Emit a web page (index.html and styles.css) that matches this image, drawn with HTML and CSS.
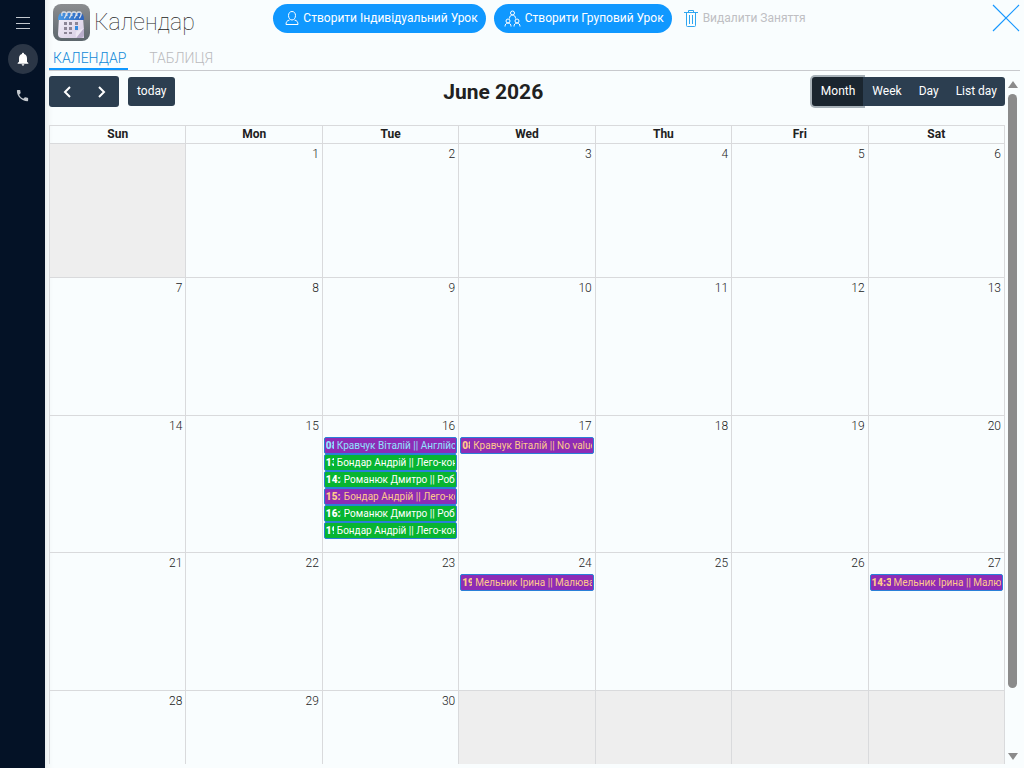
FILE: index.html
```html
<!DOCTYPE html>
<html lang="uk">

<head>
  <meta charset="utf-8">
  <title>Календар</title>
  <link rel="stylesheet" href="styles.css">
</head>

<body>
  <nav class="sidebar">
    <button class="side-button" aria-label="Menu">
      <svg width="14" height="14" viewBox="0 0 14 14"><path d="M0 1.500h14M0 7.500h14M0 12.500h14" stroke="#c3c8ce" stroke-width="1"/></svg>
    </button>
    <button class="side-button active" aria-label="Notifications">
      <svg width="16" height="16" viewBox="0 0 24 24" fill="#fff"><path d="M12 22c1.100 0 2-.9 2-2h-4c0 1.100.9 2 2 2zm6-6v-5c0-3.070-1.630-5.640-4.500-6.320V4c0-.83-.67-1.500-1.500-1.500s-1.500.67-1.500 1.500v.68C7.640 5.360 6 7.920 6 11v5l-2 2v1h16v-1l-2-2z"/></svg>
    </button>
    <button class="side-button" aria-label="Phone">
      <svg width="15" height="15" viewBox="0 0 24 24" fill="#c3c8ce"><path d="M6.620 10.790c1.440 2.830 3.760 5.140 6.590 6.590l2.200-2.200c.27-.27.67-.36 1.020-.24 1.120.37 2.330.57 3.570.57.55 0 1 .45 1 1V20c0 .55-.45 1-1 1-9.390 0-17-7.610-17-17 0-.55.45-1 1-1h3.500c.55 0 1 .45 1 1 0 1.250.2 2.450.57 3.570.11.35.03.74-.25 1.020l-2.200 2.200z"/></svg>
    </button>
  </nav>

  <main class="page">
    <header class="page-header">
      <div class="brand">
        <svg class="logo" width="37" height="37" viewBox="0 0 37 37">
          <defs>
            <linearGradient id="tile" x1="0" y1="0" x2="0" y2="1"><stop offset="0" stop-color="#8b8d90"/><stop offset="1" stop-color="#5c666c"/></linearGradient>
            <linearGradient id="top" x1="0" y1="0" x2="1" y2="0"><stop offset="0" stop-color="#4a9be6"/><stop offset="1" stop-color="#2a62bd"/></linearGradient>
            <linearGradient id="sheet" x1="0" y1="0" x2="1" y2="1"><stop offset="0" stop-color="#f3eff9"/><stop offset="1" stop-color="#d5cbe2"/></linearGradient>
          </defs>
          <rect width="37" height="37" rx="8" fill="url(#tile)"/>
          <path d="M6 14h24l1 12v8H9q-4 0-4-4z" fill="url(#sheet)"/>
          <path d="M5 16q0-7 4-7h18q4 0 4 7z" fill="url(#top)"/>
          <path d="M23 34l8-10v6q0 4-4 4z" fill="#b9aecb"/>
          <path d="M31 24l-8 10q-1-6 1-7z" fill="#ece7f3"/>
          <path d="M9 12q-1-4 2-4t2 3-2 3M14 12q-1-4 2-4t2 3-2 3M19 12q-1-4 2-4t2 3-2 3M24 12q-1-4 2-4t2 3-2 3" fill="none" stroke="#d8dce6" stroke-width="1.300"/>
          <path d="M11 18h3v3h-3zM16 18h3v3h-3zM22 18h3v3h-3zM11 23h3v3h-3zM16 23h3v3h-3zM11 28h3v2h-3zM16 28h3v2h-3z" fill="#8c8596"/>
          <path d="M22 22h3v4h-3z" fill="#358be0"/>
        </svg>
        <h1>Календар</h1>
      </div>

      <div class="actions">
        <button class="pill">
          <svg width="14" height="16" viewBox="0 0 14 16" fill="none" stroke="#fff"><path d="M7 1.500c2 0 3.500 1.500 3.500 4s-1.500 4.500-3.500 4.500-3.500-2-3.500-4.500 1.500-4 3.500-4zM4.500 10C2 10.500 1 12 1 14.500h12c0-2.500-1-4-3.500-4.500"/></svg>
          Створити Індивідуальний Урок
        </button>
        <button class="pill group">
          <svg width="17" height="17" viewBox="0 0 17 17" fill="none" stroke="#fff"><circle cx="8.500" cy="3" r="2"/><path d="M5.500 8.500c0-2 1-3.500 3-3.500s3 1.500 3 3.500"/><circle cx="4" cy="11" r="2"/><circle cx="13" cy="11" r="2"/><path d="M1 16.500c0-2 1-3.500 3-3.500s3 1.500 3 3.500M10 16.500c0-2 1-3.500 3-3.500s3 1.500 3 3.500"/></svg>
          Створити Груповий Урок
        </button>
        <button class="delete" disabled>
          <svg width="14" height="17" viewBox="0 0 14 17" fill="none" stroke="#2fa5f0"><path d="M0 2.500h14M4.500 2V.5h5V2M2.500 3v12.500q0 1 1 1h7q1 0 1-1V3M5.500 5v9M8.500 5v9"/></svg>
          Видалити Заняття
        </button>
      </div>

      <button class="close" aria-label="Close">
        <svg width="28" height="28" viewBox="0 0 28 28"><path d="M1 1l26 26M27 1L1 27" stroke="#1898ff" stroke-width="1.200"/></svg>
      </button>
    </header>

    <div class="tabs">
      <a class="tab active" href="#calendar">КАЛЕНДАР</a>
      <a class="tab" href="#table">ТАБЛИЦЯ</a>
    </div>

    <div class="scroll-area">
      <section class="calendar" id="calendar">
        <div class="toolbar">
          <div class="toolbar-left">
            <div class="button-group arrows">
              <button aria-label="Previous month"><svg width="8" height="12" viewBox="0 0 8 12"><path d="M7 1L2 6l5 5" fill="none" stroke="#fff" stroke-width="2"/></svg></button>
              <button aria-label="Next month"><svg width="8" height="12" viewBox="0 0 8 12"><path d="M1 1l5 5-5 5" fill="none" stroke="#fff" stroke-width="2"/></svg></button>
            </div>
            <div class="button-group"><button>today</button></div>
          </div>
          <h2>June 2026</h2>
          <div class="button-group views">
            <button class="active">Month</button>
            <button>Week</button>
            <button>Day</button>
            <button>List day</button>
          </div>
        </div>

        <table>
          <thead>
            <tr><th>Sun</th><th>Mon</th><th>Tue</th><th>Wed</th><th>Thu</th><th>Fri</th><th>Sat</th></tr>
          </thead>
          <tbody>
            <tr class="first-week">
              <td class="other"></td><td>1</td><td>2</td><td>3</td><td>4</td><td>5</td><td>6</td>
            </tr>
            <tr>
              <td>7</td><td>8</td><td>9</td><td>10</td><td>11</td><td>12</td><td>13</td>
            </tr>
            <tr class="busy-week">
              <td>14</td>
              <td>15</td>
              <td>16
                <div class="events">
                  <a href="#e1" class="event purple cyan-text"><b class="time">08:00</b><span>Кравчук Віталій || Англійська</span></a>
                  <a href="#e2" class="event green"><b class="time">13:00</b><span>Бондар Андрій || Лего-конструювання</span></a>
                  <a href="#e3" class="event green"><b class="time wide">14:30</b><span>Романюк Дмитро || Робототехніка</span></a>
                  <a href="#e4" class="event purple"><b class="time wide">15:40</b><span>Бондар Андрій || Лего-конструювання</span></a>
                  <a href="#e5" class="event green"><b class="time wide">16:30</b><span>Романюк Дмитро || Робототехніка</span></a>
                  <a href="#e6" class="event green"><b class="time">19:00</b><span>Бондар Андрій || Лего-конструювання</span></a>
                </div>
              </td>
              <td>17
                <div class="events">
                  <a href="#e7" class="event purple"><b class="time">08:00</b><span>Кравчук Віталій || No value</span></a>
                </div>
              </td>
              <td>18</td>
              <td>19</td>
              <td>20</td>
            </tr>
            <tr>
              <td>21</td>
              <td>22</td>
              <td>23</td>
              <td>24
                <div class="events">
                  <a href="#e8" class="event purple"><b class="time medium">19:00</b><span>Мельник Ірина || Малювання</span></a>
                </div>
              </td>
              <td>25</td>
              <td>26</td>
              <td>27
                <div class="events">
                  <a href="#e9" class="event purple"><b class="time widest">14:30</b><span>Мельник Ірина || Малювання</span></a>
                </div>
              </td>
            </tr>
            <tr>
              <td>28</td><td>29</td><td>30</td><td class="other"></td><td class="other"></td><td class="other"></td><td class="other"></td>
            </tr>
          </tbody>
        </table>
      </section>

      <div class="scrollbar" aria-hidden="true">
        <div class="arrow up"></div>
        <div class="track"><div class="thumb"></div></div>
        <div class="arrow down"></div>
      </div>
    </div>
  </main>
</body>

</html>
```
FILE: styles.css
```css
* {
  box-sizing: border-box;
}

body {
  margin: 0;
  height: 100vh;
  display: flex;
  overflow: hidden;
  background: #f9fdfe;
  color: #212121;
  font-family: Roboto, sans-serif;
  font-size: 12px;
}

button {
  font-family: inherit;
  border: 0;
  padding: 0;
  background: none;
  cursor: pointer;
}

.sidebar {
  flex: none;
  width: 45px;
  padding-top: 8px;
  background: #041226;
  display: flex;
  flex-direction: column;
  align-items: center;
  gap: 6px;
}

.side-button {
  width: 30px;
  height: 30px;
  border-radius: 50%;
  display: flex;
  align-items: center;
  justify-content: center;
}

.side-button.active {
  background: #2b3646;
}

.page {
  flex: 1;
  min-width: 0;
  padding: 0 4px 4px;
  display: flex;
  flex-direction: column;
  box-shadow: inset 8px 0 8px -8px #00000022;
}

.page-header {
  height: 44px;
  flex: none;
  padding-left: 4px;
  display: flex;
  justify-content: space-between;
}

.brand {
  flex: 1;
  display: flex;
  align-items: center;
  gap: 4px;
}

h1 {
  margin: 0;
  font-size: 23px;
  font-weight: 100;
}

.actions {
  display: flex;
  align-items: flex-start;
  gap: 8px;
  padding: 4px 0 0 6px;
}

.pill,
.delete {
  height: 29px;
  display: flex;
  align-items: center;
  gap: 4px;
  font-size: 12px;
  white-space: nowrap;
}

.pill {
  padding: 0 8px 1px 12px;
  border-radius: 15px;
  background: #1098ff;
  color: #fff;
}

.pill.group {
  padding-left: 10px;
}

.delete {
  padding: 0 0 1px 4px;
  gap: 5px;
  color: #bfbfc3;
}

.close {
  flex: 1;
  display: flex;
  justify-content: flex-end;
  padding-top: 4px;
}

.tabs {
  flex: none;
  height: 27px;
  border-bottom: 1px solid #c8c9cd;
  display: flex;
  gap: 17px;
}

.tab {
  height: 26px;
  padding: 6px 2px 0 4px;
  font-size: 14px;
  line-height: 16px;
  font-weight: 300;
  color: #b9babd;
  text-decoration: none;
}

.tab.active {
  color: #1089d8;
  border-bottom: 2px solid #1098ff;
}

.scroll-area {
  flex: 1;
  min-height: 0;
  display: flex;
  overflow: hidden;
}

.calendar {
  flex: 1;
  min-width: 0;
  padding-top: 5px;
}

.toolbar {
  height: 31px;
  margin-bottom: 18px;
  display: flex;
  justify-content: space-between;
  align-items: center;
}

.toolbar-left {
  display: flex;
  align-items: center;
  gap: 9px;
}

h2 {
  margin: 0;
  font-size: 21px;
  font-weight: 700;
}

.button-group {
  display: flex;
}

.button-group button {
  height: 29px;
  padding: 0 8px 2px 9px;
  background: #2c3e50;
  color: #fff;
  font-size: 12px;
}

.button-group button:first-child {
  border-top-left-radius: 3px;
  border-bottom-left-radius: 3px;
}

.button-group button:last-child {
  border-top-right-radius: 3px;
  border-bottom-right-radius: 3px;
}

.button-group.arrows button {
  width: 35px;
  height: 31px;
  padding: 3px 0 0;
}

.button-group .active {
  background: #1a252f;
  box-shadow: 0 0 0 2px #2c3e5066;
}

table {
  width: 100%;
  table-layout: fixed;
  border-collapse: collapse;
}

th,
td {
  border: 1px solid #d9dadc;
}

th {
  height: 18px;
  padding: 0 0 1px;
  font-size: 12px;
  line-height: 15px;
  font-weight: 700;
}

td {
  height: 138px;
  padding: 3px 3px 0 1px;
  vertical-align: top;
  text-align: right;
  line-height: 15px;
  font-weight: 300;
}

.first-week td {
  height: 134px;
}

.busy-week td {
  height: 137px;
}

.other {
  background: #eeeeee;
}

.events {
  margin: 3px -2px 0 0;
  display: flex;
  flex-direction: column;
}

.event {
  height: 17px;
  padding: 0 1px;
  border: 1px solid #2a80d8;
  border-radius: 2px;
  display: flex;
  gap: 3px;
  overflow: hidden;
  color: #fff;
  font-size: 10px;
  line-height: 16px;
  font-weight: 400;
  text-align: left;
  text-decoration: none;
  white-space: nowrap;
}

.event span {
  flex: 1;
  min-width: 0;
  overflow: hidden;
}

.purple {
  background: #8e2cb5;
  color: #ffc98b;
}

.green {
  background: #07b531;
}

.cyan-text {
  color: #8fe3ff;
}

.time {
  flex: none;
  width: 8px;
  overflow: hidden;
  font-weight: 900;
}

.time.medium {
  width: 10px;
}

.time.wide {
  width: 15px;
}

.time.widest {
  width: 19px;
}

.scrollbar {
  flex: none;
  width: 15px;
  padding: 10px 3px 4px;
  display: flex;
  flex-direction: column;
  align-items: center;
  gap: 6px;
}

.arrow {
  border: 5px solid transparent;
}

.arrow.up {
  border-top: 0;
  border-bottom: 7px solid #8b8b8b;
}

.arrow.down {
  border-bottom: 0;
  border-top: 7px solid #8b8b8b;
}

.track {
  flex: 1;
  width: 9px;
}

.thumb {
  height: 91%;
  border-radius: 5px;
  background: #8b8b8b;
}
```
